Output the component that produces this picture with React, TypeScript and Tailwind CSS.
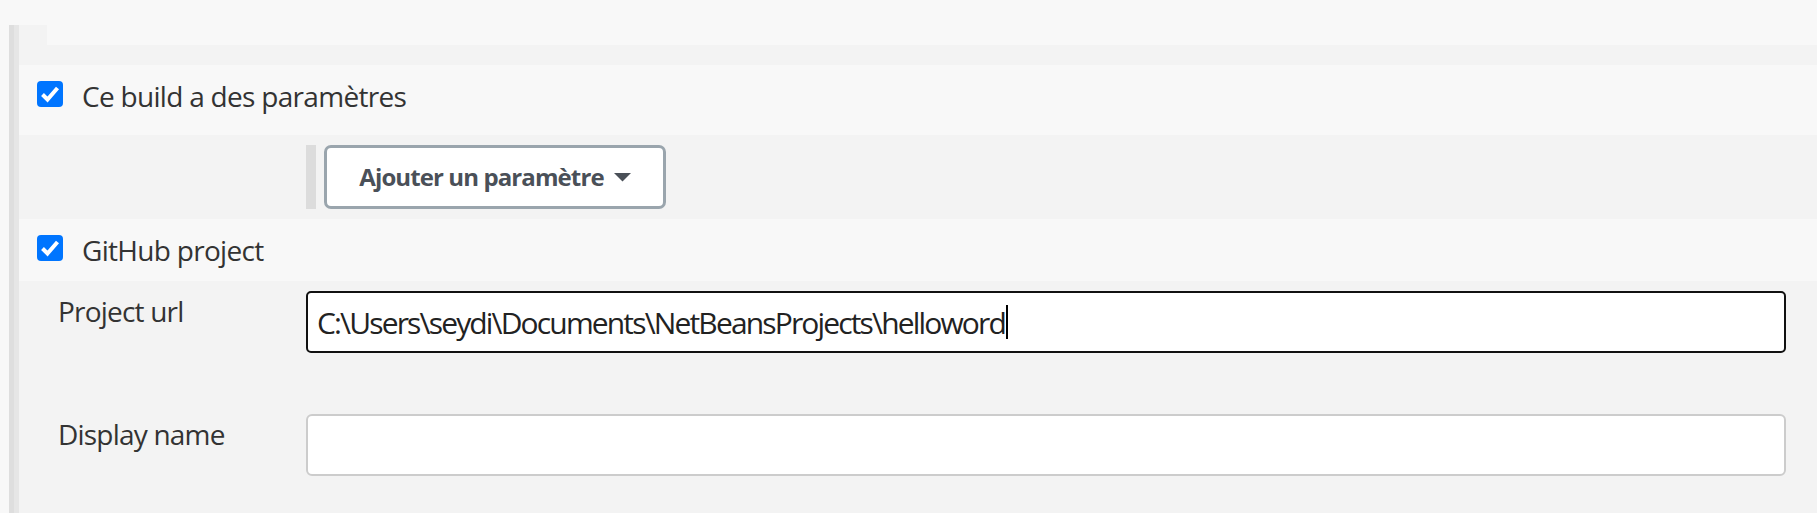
import React from "react";

function CheckBox() {
  return (
    <div className="w-[26px] h-[26px] shrink-0 rounded-[4px] bg-[#0075ff] flex items-center justify-center">
      <svg width="26" height="26" viewBox="0 0 26 26">
        <path d="M5.5 13.5 L10.5 18.5 L20.5 7" stroke="#ffffff" strokeWidth="4" fill="none" strokeLinejoin="miter" />
      </svg>
    </div>
  );
}

function CheckRow({ label, h }: { label: string; h: string }) {
  return (
    <div className={`${h} bg-[#f8f8f8] pl-[18px] pt-[12px] flex items-start gap-[19px]`}>
      <div className="mt-[4px]">
        <CheckBox />
      </div>
      <span className="text-[28px] leading-[38px] tracking-[-0.7px] text-[#333]">{label}</span>
    </div>
  );
}

export default function App() {
  return (
    <div className="h-[513px] overflow-hidden bg-[#f8f8f8] pt-[25px] pl-[9px] font-['Open_Sans',sans-serif] text-[#333]">
      <div className="h-full border-l-[5px] border-[#dedede]">
        <div className="h-full border-l-[5px] border-[#e6e6e6] flex flex-col">
          <div className="bg-[#f3f3f3] pl-[28px] pb-[20px]">
            <div className="h-[20px] bg-[#f8f8f8]" />
          </div>
          <CheckRow label="Ce build a des paramètres" h="h-[70px]" />
          <div className="h-[84px] bg-[#f3f3f3] pl-[287px] pt-[10px] flex gap-[8px]">
            <div className="w-[10px] h-[64px] bg-[#dcdcdc]" />
            <button className="w-[342px] h-[64px] rounded-[7px] border-[3px] border-[#9aa5ad] bg-white flex items-center justify-center gap-[10px] font-bold text-[24px] tracking-[-0.9px] text-[#4a5058]">
              <span>Ajouter un paramètre</span>
              <svg width="17" height="9" viewBox="0 0 17 9">
                <polygon points="0,0 17,0 8.5,8.5" fill="#4a5058" />
              </svg>
            </button>
          </div>
          <CheckRow label="GitHub project" h="h-[62px]" />
          <div className="flex-1 bg-[#f3f3f3] pt-[10px] pl-[39px] pr-[31px]">
            <div className="flex">
              <div className="w-[248px] shrink-0 pt-[1px] text-[28px] leading-[38px] tracking-[-0.8px]">Project url</div>
              <div className="flex-1 h-[62px] rounded-[5px] border-2 border-[#111] bg-white flex items-center pl-[9px] text-[30px] tracking-[-1.85px] text-[#222] whitespace-nowrap">
                <span>C:\Users\seydi\Documents\NetBeansProjects\helloword</span>
                <span className="inline-block w-[2px] h-[34px] bg-black ml-[1px]" />
              </div>
            </div>
            <div className="flex mt-[61px]">
              <div className="w-[248px] shrink-0 pt-[1px] text-[28px] leading-[38px] tracking-[-0.8px]">Display name</div>
              <div className="flex-1 h-[62px] rounded-[6px] border-2 border-[#cccccc] bg-white" />
            </div>
          </div>
        </div>
      </div>
    </div>
  );
}
